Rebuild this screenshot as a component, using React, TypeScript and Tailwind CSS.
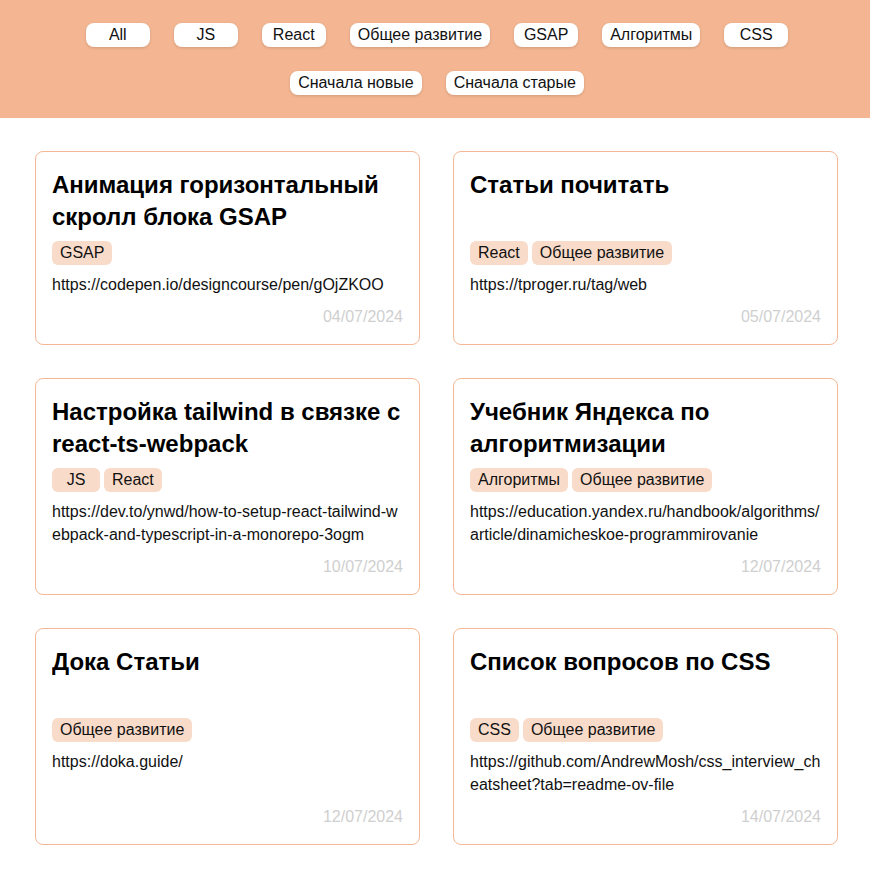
import React from "react";

type Post = {
  title: string;
  tags: string[];
  url: string;
  date: string;
};

const filters = ["All", "JS", "React", "Общее развитие", "GSAP", "Алгоритмы", "CSS"];
const sorts = ["Сначала новые", "Сначала старые"];

const posts: Post[] = [
  {
    title: "Анимация горизонтальный скролл блока GSAP",
    tags: ["GSAP"],
    url: "https://codepen.io/designcourse/pen/gOjZKOO",
    date: "04/07/2024",
  },
  {
    title: "Статьи почитать",
    tags: ["React", "Общее развитие"],
    url: "https://tproger.ru/tag/web",
    date: "05/07/2024",
  },
  {
    title: "Настройка tailwind в связке с react-ts-webpack",
    tags: ["JS", "React"],
    url: "https://dev.to/ynwd/how-to-setup-react-tailwind-webpack-and-typescript-in-a-monorepo-3ogm",
    date: "10/07/2024",
  },
  {
    title: "Учебник Яндекса по алгоритмизации",
    tags: ["Алгоритмы", "Общее развитие"],
    url: "https://education.yandex.ru/handbook/algorithms/article/dinamicheskoe-programmirovanie",
    date: "12/07/2024",
  },
  {
    title: "Дока Статьи",
    tags: ["Общее развитие"],
    url: "https://doka.guide/",
    date: "12/07/2024",
  },
  {
    title: "Список вопросов по CSS",
    tags: ["CSS", "Общее развитие"],
    url: "https://github.com/AndrewMosh/css_interview_cheatsheet?tab=readme-ov-file",
    date: "14/07/2024",
  },
];

function FilterButton({ label }: { label: string }) {
  return (
    <button className="h-6 min-w-16 px-2 bg-white rounded-lg shadow-[0_1px_3px_rgba(0,0,0,0.15)] text-[16px] leading-6 text-[#111]">
      {label}
    </button>
  );
}

function Card({ post }: { post: Post }) {
  return (
    <div className="flex flex-col border border-[#f5b896] rounded-lg px-4 pt-[17px] pb-[15px]">
      <h2 className="h-16 text-[24px] leading-8 font-bold text-black overflow-hidden">{post.title}</h2>
      <div className="flex flex-wrap gap-1 mt-2">
        {post.tags.map((t) => (
          <span key={t} className="h-6 min-w-12 px-2 text-center rounded-md bg-[#f9dbca] text-[16px] leading-6 text-[#111]">
            {t}
          </span>
        ))}
      </div>
      <a className="mt-2 text-[16px] leading-[23.5px] text-[#111] break-all">{post.url}</a>
      <div className="mt-auto pt-2 text-right text-[16px] leading-6 text-[#cfcfcf]">{post.date}</div>
    </div>
  );
}

export default function App() {
  return (
    <div className="min-h-[870px] bg-white font-['Liberation_Sans',Arial,sans-serif]">
      <header className="bg-[#f4b692] py-[23px] pl-[4px] flex flex-col gap-6">
        <div className="flex justify-center gap-6">
          {filters.map((f) => (
            <FilterButton key={f} label={f} />
          ))}
        </div>
        <div className="flex justify-center gap-6">
          {sorts.map((s) => (
            <FilterButton key={s} label={s} />
          ))}
        </div>
      </header>
      <main className="grid grid-cols-2 gap-[33px] pl-[35px] pr-[32px] pt-[33px] pb-[26px]">
        {posts.map((p) => (
          <Card key={p.title} post={p} />
        ))}
      </main>
    </div>
  );
}
